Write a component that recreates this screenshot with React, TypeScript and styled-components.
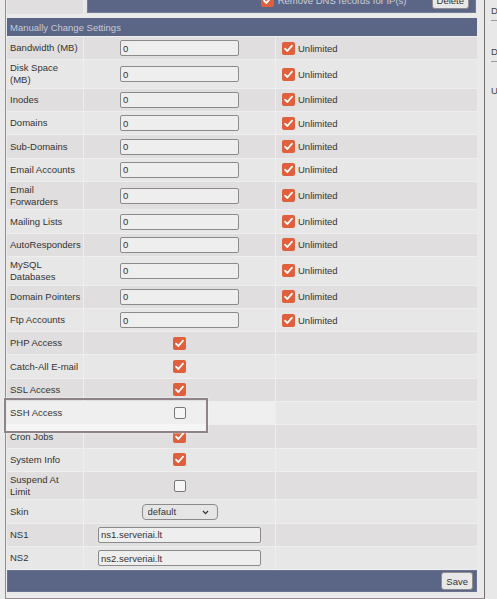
import React from 'react'
import styled, { createGlobalStyle } from 'styled-components'

type RowDef =
  | { label: string[]; kind: 'limit' }
  | { label: string[]; kind: 'check'; checked: boolean; focus?: boolean }
  | { label: string[]; kind: 'select'; value: string }
  | { label: string[]; kind: 'text'; value: string }

const rows: RowDef[] = [
  { label: ['Bandwidth (MB)'], kind: 'limit' },
  { label: ['Disk Space', '(MB)'], kind: 'limit' },
  { label: ['Inodes'], kind: 'limit' },
  { label: ['Domains'], kind: 'limit' },
  { label: ['Sub-Domains'], kind: 'limit' },
  { label: ['Email Accounts'], kind: 'limit' },
  { label: ['Email', 'Forwarders'], kind: 'limit' },
  { label: ['Mailing Lists'], kind: 'limit' },
  { label: ['AutoResponders'], kind: 'limit' },
  { label: ['MySQL', 'Databases'], kind: 'limit' },
  { label: ['Domain Pointers'], kind: 'limit' },
  { label: ['Ftp Accounts'], kind: 'limit' },
  { label: ['PHP Access'], kind: 'check', checked: true },
  { label: ['Catch-All E-mail'], kind: 'check', checked: true },
  { label: ['SSL Access'], kind: 'check', checked: true },
  { label: ['SSH Access'], kind: 'check', checked: false, focus: true },
  { label: ['Cron Jobs'], kind: 'check', checked: true },
  { label: ['System Info'], kind: 'check', checked: true },
  { label: ['Suspend At', 'Limit'], kind: 'check', checked: false },
  { label: ['Skin'], kind: 'select', value: 'default' },
  { label: ['NS1'], kind: 'text', value: 'ns1.serveriai.lt' },
  { label: ['NS2'], kind: 'text', value: 'ns2.serveriai.lt' },
]

function Check({ checked }: { checked: boolean }) {
  return (
    <Box $checked={checked}>
      {checked && (
        <svg width='13' height='13' viewBox='0 0 13 13'>
          <polyline
            points='3,6.6 5.4,9 10,3.6'
            fill='none'
            stroke='#fff'
            strokeWidth='1.8'
            strokeLinecap='round'
            strokeLinejoin='round'
          />
        </svg>
      )}
    </Box>
  )
}

function Value({ row }: { row: RowDef }) {
  if (row.kind === 'limit') return <Field $w={119} defaultValue='0' />
  if (row.kind === 'check') return <Check checked={row.checked} />
  if (row.kind === 'text') return <Field $w={163} defaultValue={row.value} />
  return (
    <SelectWrap>
      <Select defaultValue={row.value}>
        <option value='default'>default</option>
      </Select>
      <Chevron width='7' height='5' viewBox='0 0 7 5'>
        <polyline points='1,1 3.5,3.6 6,1' fill='none' stroke='#333' strokeWidth='1.2' />
      </Chevron>
    </SelectWrap>
  )
}

export default function App() {
  return (
    <Page>
      <GlobalStyle />
      <Main>
        <TopRow>
          <TopLabel />
          <TopCell>
            <DarkBlock>
              <Check checked />
              <DarkText>Remove DNS records for IP(s)</DarkText>
              <Button>Delete</Button>
            </DarkBlock>
          </TopCell>
        </TopRow>
        <Table>
          <Header>Manually Change Settings</Header>
          {rows.map((row, i) => {
            const tone = row.kind === 'check' && row.focus ? 'focus' : i % 2 === 1 ? 'light' : 'dark'
            return (
              <Row key={row.label.join(' ')} $tall={row.label.length > 1}>
                <Label $tone={tone}>
                  <span>
                    {row.label.map((l, j) => (
                      <React.Fragment key={l}>
                        {j > 0 && <br />}
                        {l}
                      </React.Fragment>
                    ))}
                  </span>
                </Label>
                <Middle $tone={tone}>
                  <Value row={row} />
                </Middle>
                <Extra $tone={i % 2 === 1 ? 'light' : 'dark'}>
                  {row.kind === 'limit' && (
                    <>
                      <Check checked />
                      <span>Unlimited</span>
                    </>
                  )}
                </Extra>
              </Row>
            )
          })}
          <Footer>
            <Button>Save</Button>
          </Footer>
        </Table>
      </Main>
      <Side>
        <SideItem $top={5}>Domain</SideItem>
        <SideItem $top={25}>Disk Usage</SideItem>
        <SideItem $top={23} $plain>Usage</SideItem>
      </Side>
      <Highlight />
    </Page>
  )
}

const tones = {
  dark: '#e0dede',
  light: '#e8e7e7',
  focus: '#efefef',
}

type Tone = keyof typeof tones

const GlobalStyle = createGlobalStyle`
  html, body {
    margin: 0;
    background: #ebeaea;
    font-family: 'Liberation Sans', Arial, sans-serif;
    font-size: 9.5px;
    color: #333;
  }
`

const Page = styled.div`
  position: relative;
  display: flex;
  height: 599px;
  overflow: hidden;
`

const Main = styled.div`
  margin-left: 5px;
  width: 470px;
  flex: none;
  align-self: flex-start;
  padding: 0 7px 6px 1px;
  border-left: 1px solid #978c93;
  border-right: 1px solid #76706f;
  border-bottom: 1px solid #978c93;
`

const TopRow = styled.div`
  display: grid;
  grid-template-columns: 76px 1fr;
  gap: 1px;
  height: 27px;
  margin-top: -13px;
  margin-bottom: 4px;
  background: #eeeded;
`

const TopLabel = styled.div`
  background: #e0dede;
`

const TopCell = styled.div`
  background: #e8e7e7;
  padding: 0 1px 1px 3px;
  display: flex;
`

const DarkBlock = styled.div`
  flex: 1;
  display: flex;
  align-items: center;
  justify-content: flex-end;
  padding-right: 6px;
  background: #5b6585;
  border: 1px solid #747c98;
  color: #cdd0dc;
`

const DarkText = styled.span`
  margin: 0 25px 0 4px;
`

const Table = styled.div`
  display: flex;
  flex-direction: column;
  gap: 1px;
  background: #efeeee;
`

const Header = styled.div`
  height: 18px;
  display: flex;
  align-items: center;
  padding-left: 3px;
  background: #5b6585;
  color: #c7cad8;
`

const Row = styled.div<{ $tall: boolean }>`
  display: grid;
  grid-template-columns: 76px 191px 1fr;
  gap: 1px;
  height: ${(p) => (p.$tall ? 27.5 : 22.3)}px;
`

const Cell = styled.div<{ $tone: Tone }>`
  display: flex;
  align-items: center;
  background: ${(p) => tones[p.$tone]};
`

const Label = styled(Cell)`
  padding: 0 3px;
  line-height: 12px;
  white-space: nowrap;
`

const Middle = styled(Cell)`
  justify-content: center;
`

const Extra = styled(Cell)`
  padding-left: 6px;
  gap: 3px;
`

const Box = styled.span<{ $checked: boolean }>`
  display: inline-flex;
  box-sizing: border-box;
  width: ${(p) => (p.$checked ? 13 : 12)}px;
  height: ${(p) => (p.$checked ? 13 : 12)}px;
  border-radius: 2px;
  flex: none;
  background: ${(p) => (p.$checked ? '#e0603e' : '#f6f6f6')};
  border: ${(p) => (p.$checked ? 'none' : '1px solid #78777b')};
`

const Field = styled.input<{ $w: number }>`
  box-sizing: border-box;
  width: ${(p) => p.$w}px;
  height: 16px;
  margin: 0;
  padding: 0 2px;
  border: 1px solid #8b8b8b;
  border-radius: 2px;
  background: #efeeee;
  font: 9.5px 'Liberation Sans', Arial, sans-serif;
  color: #333;
  outline: none;
`

const SelectWrap = styled.div`
  position: relative;
  display: flex;
`

const Select = styled.select`
  appearance: none;
  box-sizing: border-box;
  width: 76px;
  height: 16px;
  margin: 0;
  padding: 0 0 0 5px;
  border: 1px solid #8b8b8b;
  border-radius: 4px;
  background: #e6e5e5;
  font: 9.5px 'Liberation Sans', Arial, sans-serif;
  color: #333;
`

const Chevron = styled.svg`
  position: absolute;
  right: 9px;
  top: 6px;
  pointer-events: none;
`

const Button = styled.button`
  box-sizing: border-box;
  height: 18px;
  padding: 0 4px;
  border: 1px solid #8e8e8e;
  border-radius: 3px;
  background: #e9e8e8;
  font: 9.5px 'Liberation Sans', Arial, sans-serif;
  color: #333;
`

const Footer = styled.div`
  height: 22px;
  box-sizing: border-box;
  display: flex;
  align-items: center;
  justify-content: flex-end;
  padding-right: 3px;
  background: #5b6585;
  border: 1px solid #6b7391;
`

const Side = styled.div`
  flex: 1;
  display: flex;
  flex-direction: column;
  padding-left: 6px;
  overflow: hidden;
  white-space: nowrap;
  background: #e9e8e8;
  color: #444;
  line-height: 11px;
`

const SideItem = styled.div<{ $top: number; $plain?: boolean }>`
  padding: ${(p) => p.$top}px 0 4px;
  border-bottom: ${(p) => (p.$plain ? 'none' : '1px solid #9a9a9a')};
`

const Highlight = styled.div`
  position: absolute;
  left: 4px;
  top: 398px;
  width: 204px;
  height: 35px;
  box-sizing: border-box;
  border: 2px solid #8d8388;
  box-shadow: 0 0 2px rgba(255, 255, 255, 0.8);
  background: linear-gradient(
    to bottom,
    transparent 0,
    transparent 24.5px,
    rgba(246, 246, 246, 0.95) 24.5px
  );
  pointer-events: none;
`
